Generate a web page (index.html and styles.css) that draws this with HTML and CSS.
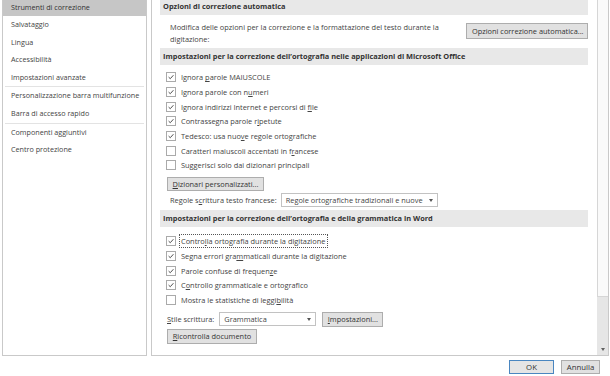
FILE: index.html
```html
<!DOCTYPE html>
<html lang="it">
<head>
    <meta charset="UTF-8">
    <title>Opzioni di Word - Strumenti di correzione</title>
    <link rel="stylesheet" href="styles.css">
</head>
<body>
    <div class="dialog">
        <div class="panes">
            <ul class="nav">
                <li class="active">Strumenti di correzione</li>
                <li>Salvataggio</li>
                <li>Lingua</li>
                <li>Accessibilità</li>
                <li>Impostazioni avanzate</li>
                <li class="sep"></li>
                <li>Personalizzazione barra multifunzione</li>
                <li>Barra di accesso rapido</li>
                <li class="sep"></li>
                <li>Componenti aggiuntivi</li>
                <li>Centro protezione</li>
            </ul>

            <div class="main">
                <div class="content">
                    <div class="section-title top">Opzioni di correzione automatica</div>
                    <div class="autocorrect">
                        <p>Modifica delle opzioni per la correzione e la formattazione del testo durante la digitazione:</p>
                        <button class="btn wide">Opzioni correzione automatica...</button>
                    </div>

                    <div class="section-title">Impostazioni per la correzione dell’ortografia nelle applicazioni di Microsoft Office</div>
                    <ul class="checks">
                        <li><span class="box on"><svg viewBox="0 0 9 9"><path d="M1.8 4.6 3.7 6.4 7.2 2.5"/></svg></span><span class="label">Ignora <u>p</u>arole MAIUSCOLE</span></li>
                        <li><span class="box on"><svg viewBox="0 0 9 9"><path d="M1.8 4.6 3.7 6.4 7.2 2.5"/></svg></span><span class="label">Ignora parole con n<u>u</u>meri</span></li>
                        <li><span class="box on"><svg viewBox="0 0 9 9"><path d="M1.8 4.6 3.7 6.4 7.2 2.5"/></svg></span><span class="label">Ignora indirizzi Internet e percorsi di <u>f</u>ile</span></li>
                        <li><span class="box on"><svg viewBox="0 0 9 9"><path d="M1.8 4.6 3.7 6.4 7.2 2.5"/></svg></span><span class="label">Contrassegna parole r<u>i</u>petute</span></li>
                        <li><span class="box on"><svg viewBox="0 0 9 9"><path d="M1.8 4.6 3.7 6.4 7.2 2.5"/></svg></span><span class="label">Tedesco: usa nuo<u>v</u>e regole ortografiche</span></li>
                        <li><span class="box"></span><span class="label">Caratteri maiuscoli accentati in f<u>r</u>ancese</span></li>
                        <li><span class="box"></span><span class="label">Suggerisci solo dai dizionari principali</span></li>
                    </ul>
                    <button class="btn dict"><u>D</u>izionari personalizzati...</button>
                    <div class="field-row french">
                        <span>Regole s<u>c</u>rittura testo francese:</span>
                        <div class="select long">Regole ortografiche tradizionali e nuove<span class="caret"></span></div>
                    </div>

                    <div class="section-title">Impostazioni per la correzione dell’ortografia e della grammatica in Word</div>
                    <ul class="checks word">
                        <li><span class="box on"><svg viewBox="0 0 9 9"><path d="M1.8 4.6 3.7 6.4 7.2 2.5"/></svg></span><span class="label focus">Contro<u>l</u>la ortografia durante la digitazione</span></li>
                        <li><span class="box on"><svg viewBox="0 0 9 9"><path d="M1.8 4.6 3.7 6.4 7.2 2.5"/></svg></span><span class="label">Segna errori gra<u>m</u>maticali durante la digitazione</span></li>
                        <li><span class="box on"><svg viewBox="0 0 9 9"><path d="M1.8 4.6 3.7 6.4 7.2 2.5"/></svg></span><span class="label">Parole confuse di frequen<u>z</u>e</span></li>
                        <li><span class="box on"><svg viewBox="0 0 9 9"><path d="M1.8 4.6 3.7 6.4 7.2 2.5"/></svg></span><span class="label">C<u>o</u>ntrollo grammaticale e ortografico</span></li>
                        <li><span class="box"></span><span class="label">Mostra le statistiche di leggi<u>b</u>ilità</span></li>
                    </ul>
                    <div class="field-row style">
                        <span><u>S</u>tile scrittura:</span>
                        <div class="select short">Grammatica<span class="caret"></span></div>
                        <button class="btn"><u>I</u>mpostazioni...</button>
                    </div>
                    <button class="btn recheck"><u>R</u>icontrolla documento</button>
                </div>
                <div class="scrollbar">
                    <div class="thumb"></div>
                    <div class="track"></div>
                    <div class="arrow"><span class="caret"></span></div>
                </div>
            </div>
        </div>

        <div class="footer">
            <button class="btn default">OK</button>
            <button class="btn cancel">Annulla</button>
        </div>
    </div>
</body>
</html>
```

FILE: styles.css
```css
html, body {
    margin: 0;
    padding: 0;
}

body {
    background-color: #ffffff;
    color: #444444;
    font-family: 'Open Sans', 'Noto Sans', sans-serif;
    font-size: 7.4px;
    width: 610px;
    height: 376px;
    overflow: hidden;
}

u {
    text-decoration-thickness: 1px;
    text-underline-offset: 1px;
}

.dialog {
    display: flex;
    flex-direction: column;
    height: 376px;
}

.panes {
    display: flex;
    height: 356px;
    padding-left: 2px;
    gap: 4px;
}

/* colonna di sinistra */
.nav {
    list-style: none;
    margin: 0;
    padding: 0;
    width: 143px;
    border: 1px solid #c9c9c9;
    border-top: none;
    box-sizing: content-box;
    font-size: 7.2px;
}

.nav li {
    height: 17.6px;
    line-height: 17.6px;
    padding-left: 8px;
    white-space: nowrap;
}

.nav li:first-child {
    height: 16px;
    line-height: 15px;
}

.nav li.active {
    background-color: #c6c6c6;
    color: #333333;
}

.nav li.sep {
    height: 1px;
    padding: 0;
    margin: 0 2px 0 2px;
    background-color: #e3e3e3;
}

/* pannello principale */
.main {
    display: flex;
    width: 456px;
    border: 1px solid #c9c9c9;
    border-top: none;
}

.content {
    flex: 1;
    padding-left: 8px;
    padding-right: 9px;
}

.section-title {
    background-color: #e8e8e8;
    color: #333333;
    font-weight: bold;
    height: 17px;
    line-height: 17px;
    padding-left: 3px;
    margin-top: 3px;
    white-space: nowrap;
}

.section-title.top {
    height: 15px;
    line-height: 13px;
    margin-top: 0;
}

.autocorrect {
    display: flex;
    justify-content: space-between;
    align-items: flex-start;
    margin-top: 6px;
}

.autocorrect p {
    margin: 0;
    padding-left: 10px;
    width: 275px;
    line-height: 12px;
}

.btn {
    font-family: inherit;
    font-size: inherit;
    color: #333333;
    background-color: #e1e1e1;
    border: 1px solid #adadad;
    padding: 0 5px;
    height: 15px;
    line-height: 13px;
    white-space: nowrap;
}

.btn.wide {
    width: 122px;
    height: 16px;
    margin-top: 2px;
}

.checks {
    list-style: none;
    margin: 5px 0 0 0;
    padding-left: 6px;
}

.checks.word {
    margin-top: 7px;
}

.checks li {
    display: flex;
    align-items: center;
    height: 14.7px;
    gap: 5px;
    white-space: nowrap;
}

.box {
    width: 8px;
    height: 8px;
    border: 1px solid #aaaaaa;
    background-color: #ffffff;
    display: flex;
}

.box svg {
    width: 8px;
    height: 8px;
    fill: none;
    stroke: #3a3a3a;
    stroke-width: 1;
}

.focus {
    outline: 1px dotted #555555;
    outline-offset: 1px;
    padding-right: 1px;
}

.btn.dict {
    display: block;
    width: 97px;
    height: 14px;
    margin: 4px 0 0 7px;
    padding: 0;
}

.field-row {
    display: flex;
    align-items: center;
    height: 14px;
    white-space: nowrap;
}

.field-row.french {
    margin: 2px 0 2px 0;
    padding-left: 10px;
    gap: 4px;
}

.field-row.style {
    margin-top: 5px;
    padding-left: 7px;
    gap: 5px;
}

.field-row.style .btn {
    width: 61px;
    height: 15px;
    padding: 0;
    margin-left: 1px;
}

.select {
    position: relative;
    box-sizing: border-box;
    height: 14px;
    line-height: 12px;
    border: 1px solid #c2c2c2;
    background-color: #ffffff;
    padding-left: 4px;
}

.select.long {
    width: 157px;
}

.select.short {
    width: 97px;
}

.select .caret {
    position: absolute;
    right: 4px;
    top: 5px;
}

.caret {
    width: 0;
    height: 0;
    border-left: 2.5px solid transparent;
    border-right: 2.5px solid transparent;
    border-top: 3px solid #555555;
}

.btn.recheck {
    display: block;
    width: 90px;
    margin: 3px 0 0 7px;
    padding: 0;
}

/* barra di scorrimento */
.scrollbar {
    width: 11px;
    display: flex;
    flex-direction: column;
    background-color: #e6e6e6;
}

.thumb {
    height: 297px;
    background-color: #fafafa;
    border-left: 1px solid #d6d6d6;
    border-bottom: 1px solid #d6d6d6;
    box-sizing: border-box;
}

.track {
    flex: 1;
}

.arrow {
    height: 11px;
    display: flex;
    align-items: center;
    justify-content: center;
}

.arrow .caret {
    border-top-color: #606060;
}

/* pulsanti in basso */
.footer {
    display: flex;
    justify-content: flex-end;
    align-items: flex-start;
    gap: 7px;
    padding: 4px 10px 0 0;
}

.footer .btn {
    height: 14px;
    padding: 0;
    font-size: 7.8px;
}

.btn.default {
    width: 45px;
    border-color: #4a86c0;
    background-color: #e5e5e5;
}

.btn.cancel {
    width: 39px;
}
```
